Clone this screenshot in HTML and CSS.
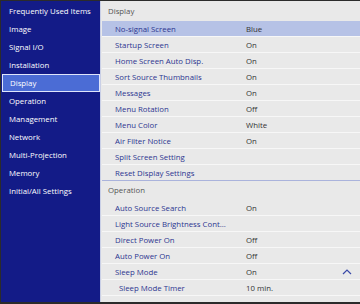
FILE: index.html
```html
<!DOCTYPE html>
<html>
<head>
    <title>Display Menu</title>
    <link rel="stylesheet" href="styles.css">
</head>
<body>
    <div class="frame">
        <aside class="sidebar">
            <ul>
                <li>Frequently Used Items</li>
                <li>Image</li>
                <li>Signal I/O</li>
                <li>Installation</li>
                <li class="active">Display</li>
                <li>Operation</li>
                <li>Management</li>
                <li>Network</li>
                <li>Multi-Projection</li>
                <li>Memory</li>
                <li>Initial/All Settings</li>
            </ul>
        </aside>

        <main class="panel">
            <div class="section-title">Display</div>
            <div class="row selected"><span class="label">No-signal Screen</span><span class="value">Blue</span></div>
            <div class="row"><span class="label">Startup Screen</span><span class="value">On</span></div>
            <div class="row"><span class="label">Home Screen Auto Disp.</span><span class="value">On</span></div>
            <div class="row"><span class="label">Sort Source Thumbnails</span><span class="value">On</span></div>
            <div class="row"><span class="label">Messages</span><span class="value">On</span></div>
            <div class="row"><span class="label">Menu Rotation</span><span class="value">Off</span></div>
            <div class="row"><span class="label">Menu Color</span><span class="value">White</span></div>
            <div class="row"><span class="label">Air Filter Notice</span><span class="value">On</span></div>
            <div class="row"><span class="label">Split Screen Setting</span></div>
            <div class="row last"><span class="label">Reset Display Settings</span></div>

            <div class="section-title op">Operation</div>
            <div class="row"><span class="label">Auto Source Search</span><span class="value">On</span></div>
            <div class="row"><span class="label">Light Source Brightness Cont...</span></div>
            <div class="row"><span class="label">Direct Power On</span><span class="value">Off</span></div>
            <div class="row"><span class="label">Auto Power On</span><span class="value">Off</span></div>
            <div class="row">
                <span class="label">Sleep Mode</span><span class="value">On</span>
                <svg class="chevron" width="10" height="6" viewBox="0 0 10 6"><path d="M1 5 L5 1 L9 5" fill="none" stroke="#3a4aa8" stroke-width="1.2"/></svg>
            </div>
            <div class="row sub"><span class="label">Sleep Mode Timer</span><span class="value">10 min.</span></div>
            <div class="row sub"><span class="label">A/V Mute Timer</span><span class="value">30 min.</span></div>
        </main>
    </div>
</body>
</html>
```

FILE: styles.css
```css
body {
    margin: 0;
    background: #2b2b2b;
    font-family: "Open Sans", sans-serif;
    font-size: 7.8px;
}
.frame {
    display: flex;
    width: 359px;
    height: 301px;
    margin: 1px 0 0 1px;
    overflow: hidden;
    background: #e9e9e9;
}
.sidebar {
    width: 99px;
    flex-shrink: 0;
    background: #131b87;
    border-right: 1px solid #c9cfe6;
    padding-top: 1px;
}
.sidebar ul {
    list-style: none;
    margin: 0;
    padding: 0;
}
.sidebar li {
    height: 18px;
    line-height: 18px;
    padding-left: 8px;
    color: #ffffff;
    white-space: nowrap;
}
.sidebar li.active {
    background: #4b6cd5;
    border: 1px solid #dfe5fb;
    height: 16px;
    line-height: 16px;
    margin: 0 0 0 1px;
    padding-left: 7px;
}
.panel {
    flex: 1;
    padding-left: 1px;
}
.section-title {
    height: 20px;
    line-height: 21px;
    padding-left: 6px;
    color: #555555;
}
.section-title.op {
    height: 19px;
    line-height: 18px;
}
.row {
    display: flex;
    align-items: center;
    height: 15px;
    border-bottom: 1px solid #f7f7f7;
    color: #2c3590;
    position: relative;
}
.row.selected {
    background: #b6c2e6;
}
.row.last {
    border-bottom: 1px solid #aab3dc;
}
.row .label {
    width: 131px;
    padding-left: 13px;
    white-space: nowrap;
}
.row .value {
    color: #333333;
}
.row.sub .label {
    padding-left: 17px;
    width: 127px;
}
.chevron {
    position: absolute;
    right: 8px;
    top: 5px;
}
```
